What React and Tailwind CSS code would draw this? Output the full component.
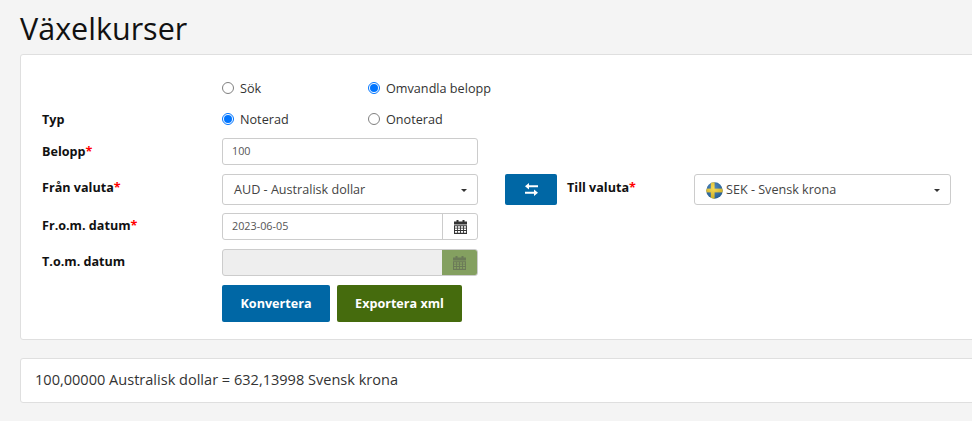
function Radio({ checked, label, className }) {
  return (
    <label className={`flex items-center ${className}`}>
      {checked ? (
        <span className="flex h-[12px] w-[12px] items-center justify-center rounded-full border border-[#0075ff] bg-white">
          <span className="h-[8px] w-[8px] rounded-full bg-[#0075ff]" />
        </span>
      ) : (
        <span className="h-[12px] w-[12px] rounded-full border border-[#808080] bg-white" />
      )}
      <span className="ml-[6px] text-[12.65px] leading-[18px] text-[#333]">{label}</span>
    </label>
  );
}

function Label({ text, required, className }) {
  return (
    <div className={`w-[180px] shrink-0 text-[12.6px] leading-[20px] font-bold text-[#111] ${className}`}>
      {text}
      {required && <span className="text-[#f00]">*</span>}
    </div>
  );
}

function Caret() {
  return <span className="h-0 w-0 border-x-[3px] border-t-[3px] border-x-transparent border-t-[#333]" />;
}

function CalendarIcon({ color }) {
  return (
    <svg width="13" height="14" viewBox="0 0 13 14" fill={color}>
      <rect x="2.5" y="0" width="2" height="2.5" />
      <rect x="8.5" y="0" width="2" height="2.5" />
      <path d="M0 1.5h13v3H0z" />
      <path fillRule="evenodd" d="M0 5.2h13V14H0zM1 6.2v1.5h2.2V6.2zm3 0v1.5h2.1V6.2zm3 0v1.5h2.1V6.2zm3 0v1.500h2.1V6.2zM1 8.6v1.5h2.2V8.6zm3 0v1.5h2.1V8.6zm3 0v1.5h2.1V8.6zm3 0v1.500h2.1V8.6zM1 11v1.8h2.2V11zm3 0v1.8h2.1V11zm3 0v1.8h2.1V11zm3 0v1.800h2.1V11z" />
    </svg>
  );
}

// top arrow points left, bottom arrow points right
function SwapIcon() {
  return (
    <svg width="13" height="13" viewBox="0 0 13 13" fill="white">
      <path d="M13 2.200H4V0L0 3.200l4 3.200V4.200h9z" />
      <path d="M0 8.800h9V6.600l4 3.200-4 3.200v-2.200H0z" />
    </svg>
  );
}

function SwedenFlag() {
  return (
    <svg width="17" height="17" viewBox="0 0 17 17" className="shrink-0">
      <defs>
        <clipPath id="flag">
          <circle cx="8.500" cy="8.500" r="8.200" />
        </clipPath>
        <radialGradient id="shade" cx="0.450" cy="0.350" r="0.700">
          <stop offset="0" stopColor="#ffffff" stopOpacity="0.200" />
          <stop offset="1" stopColor="#000000" stopOpacity="0.200" />
        </radialGradient>
      </defs>
      <g clipPath="url(#flag)">
        <rect width="17" height="17" fill="#2a6fb0" />
        <rect x="4.800" width="3.800" height="17" fill="#f7d22a" />
        <rect y="6.600" width="17" height="3.800" fill="#f7d22a" />
        <rect width="17" height="17" fill="url(#shade)" />
      </g>
    </svg>
  );
}

export default function App() {
  return (
    <div className="h-[421px] w-[972px] overflow-hidden bg-[#f4f4f4] font-['Open_Sans',sans-serif]">
      <h1 className="pl-5 pt-[8px] text-[30.500px] leading-[41px] text-[#111]">Växelkurser</h1>

      <div className="ml-5 mt-[5px] h-[286px] w-[980px] rounded-[3px] border border-[#dfdfdf] bg-white pl-[21px] pt-[23px]">
        <div className="flex h-[20px] items-center pl-[180px]">
          <Radio label="Sök" className="w-[146px]" />
          <Radio checked label="Omvandla belopp" />
        </div>

        <div className="mt-[11px] flex h-[20px] items-center">
          <Label text="Typ" className="pt-[1px]" />
          <Radio checked label="Noterad" className="w-[146px]" />
          <Radio label="Onoterad" />
        </div>

        <div className="mt-[9px] flex items-start">
          <Label text="Belopp" required className="pt-[4px]" />
          <div className="flex h-[27px] w-[256px] items-center rounded-[3px] border border-[#ccc] bg-white px-[9px] text-[10.800px] text-[#555]">
            100
          </div>
        </div>

        <div className="mt-[9px] flex items-start">
          <Label text="Från valuta" required className="pt-[4px]" />
          <div className="flex h-[31px] w-[256px] items-center justify-between rounded-[3px] border border-[#ccc] bg-white pl-[11px] pr-[10px] pt-[2px] text-[12.600px] text-[#444]">
            AUD - Australisk dollar
            <Caret />
          </div>
          <button className="ml-[27px] flex h-[31px] w-[52px] items-center justify-center rounded-[2px] bg-[#0067a5]">
            <SwapIcon />
          </button>
          <div className="ml-[10px] w-[127px] pt-[2px] text-[12.600px] leading-[24px] font-bold text-[#111]">
            Till valuta<span className="text-[#f00]">*</span>
          </div>
          <div className="flex h-[31px] w-[257px] items-center justify-between rounded-[3px] border border-[#ccc] bg-white pl-[11px] pr-[10px] pt-[2px] text-[12.600px] text-[#444]">
            <span className="flex items-center gap-[3px]">
              <SwedenFlag />
              SEK - Svensk krona
            </span>
            <Caret />
          </div>
        </div>

        <div className="mt-[8px] flex items-start">
          <Label text="Fr.o.m. datum" required className="pt-[3px]" />
          <div className="flex h-[27px] w-[256px] rounded-[3px] border border-[#ccc] bg-white">
            <div className="flex flex-1 items-center px-[9px] text-[10.800px] text-[#555]">2023-06-05</div>
            <div className="flex w-[35px] items-center justify-center border-l border-[#ccc]">
              <CalendarIcon color="#333" />
            </div>
          </div>
        </div>

        <div className="mt-[9px] flex items-start">
          <Label text="T.o.m. datum" className="pt-[3px]" />
          <div className="flex h-[27px] w-[256px] overflow-hidden rounded-[3px] border border-[#ccc] bg-[#eee]">
            <div className="flex-1" />
            <div className="flex w-[35px] items-center justify-center bg-[#84a060]">
              <CalendarIcon color="#6b7a58" />
            </div>
          </div>
        </div>

        <div className="mt-[9px] flex gap-[7px] pl-[180px]">
          <button className="h-[37px] w-[108px] rounded-[2px] bg-[#0067a5] pt-[2px] text-[12.600px] font-bold text-white">
            Konvertera
          </button>
          <button className="h-[37px] w-[125px] rounded-[2px] bg-[#456b0d] pt-[2px] text-[12.600px] font-bold text-white">
            Exportera xml
          </button>
        </div>
      </div>

      <div className="ml-5 mt-[18px] flex h-[45px] w-[980px] items-center rounded-[3px] border border-[#dfdfdf] bg-white pb-[2px] pl-[14px] text-[14.560px] text-[#333]">
        100,00000 Australisk dollar = 632,13998 Svensk krona
      </div>
    </div>
  );
}
